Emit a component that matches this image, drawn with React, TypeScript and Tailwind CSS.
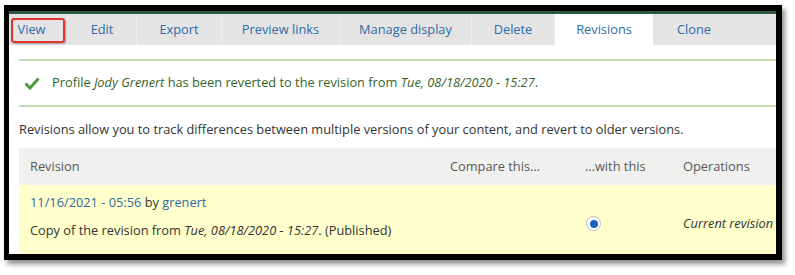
import React from "react";

const tabs = [
  { label: "View", w: "w-[59px] pr-[13px]" },
  { label: "Edit", w: "w-[69px]" },
  { label: "Export", w: "w-[85px]" },
  { label: "Preview links", w: "w-[118px]" },
  { label: "Manage display", w: "w-[132px]" },
  { label: "Delete", w: "w-[83px]" },
  { label: "Revisions", w: "w-[98px]", active: true },
  { label: "Clone", w: "w-[82px]" },
];

function Check() {
  return (
    <svg width="16" height="13" viewBox="0 0 16 13" className="shrink-0">
      <path d="M1.5 6.5 L6 11 L14.5 1.5" fill="none" stroke="#4e9a3e" strokeWidth="3" strokeLinejoin="miter" />
    </svg>
  );
}

export default function App() {
  return (
    <div className="h-[275px] w-[795px] bg-white font-['Open_Sans',sans-serif] text-[12.8px]">
      <div className="ml-[4px] pt-[5px]">
        <div className="flex h-[255px] w-[778px] flex-col overflow-hidden border-b-[6px] border-l-[5px] border-r-[6px] border-t-[6px] border-black bg-white shadow-[3px_4px_5px_rgba(0,0,0,0.45)]">
          <div className="h-[3px] bg-[#2d5a3c]" />
          {/* tabs */}
          <div className="flex h-[31px] bg-[#e4e4e4]">
            {tabs.map((t, i) => (
              <div
                key={t.label}
                className={`relative flex items-center justify-center ${t.w} ${t.active ? "bg-white" : "border-r border-[#eeeeee]"} ${i === tabs.length - 1 ? "border-r-0" : ""} text-[#2f6ba4]`}
              >
                {t.label}
                {i === 0 && (
                  <div className="absolute left-[2px] top-[4px] h-[25px] w-[54px] rounded-[3px] border-2 border-[#e0342f] shadow-[1px_1px_2px_rgba(0,0,0,0.3)]" />
                )}
              </div>
            ))}
          </div>
          {/* body */}
          <div className="flex flex-1 flex-col pl-[10px] pt-[14px]">
            <div className="flex h-[48px] items-center gap-[12px] border-y-2 border-[#c5dcb3] pl-[5px] text-[#346329]">
              <Check />
              <span>
                Profile <em>Jody Grenert</em> has been reverted to the revision from <em>Tue, 08/18/2020 - 15:27</em>.
              </span>
            </div>
            <p className="mt-[13px] leading-[18px] text-[#333]">
              Revisions allow you to track differences between multiple versions of your content, and revert to older versions.
            </p>
            <div className="mt-[10px] flex flex-1 flex-col">
              <div className="flex h-[37px] items-center bg-[#f0f0ee] text-[#585858]">
                <div className="w-[431px] pl-[11px]">Revision</div>
                <div className="w-[135px]">Compare this…</div>
                <div className="w-[98px]">…with this</div>
                <div>Operations</div>
              </div>
              <div className="flex flex-1 bg-[#ffffcc] text-[#333]">
                <div className="w-[566px] pl-[11px] pt-[8px]">
                  <div>
                    <span className="text-[#2f6ba4]">11/16/2021 - 05:56</span> by{" "}
                    <span className="text-[#2f6ba4]">grenert</span>
                  </div>
                  <div className="mt-[9px]">
                    Copy of the revision from <em>Tue, 08/18/2020 - 15:27</em>. (Published)
                  </div>
                </div>
                <div className="flex w-[98px] items-center pl-[1px] pt-[8px]">
                  <span className="flex h-[15px] w-[15px] items-center justify-center rounded-full border border-[#b8b8c8] bg-white">
                    <span className="h-[8px] w-[8px] rounded-full bg-[#1f5fbf]" />
                  </span>
                </div>
                <div className="flex items-center pt-[8px] italic">Current revision</div>
              </div>
            </div>
          </div>
        </div>
      </div>
    </div>
  );
}
